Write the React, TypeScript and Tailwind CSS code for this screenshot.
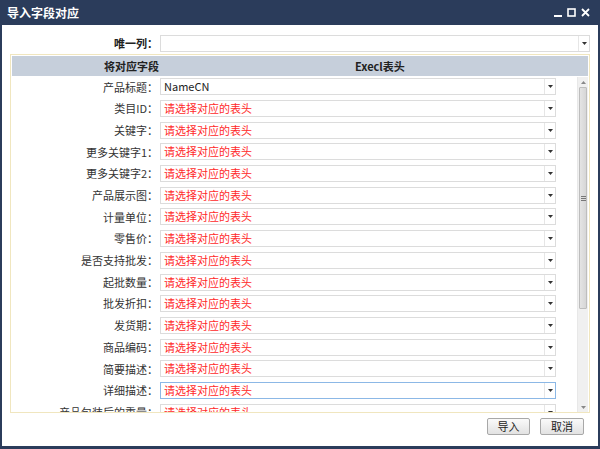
import React from 'react';

const rows: { label: string; value?: string; focused?: boolean }[] = [
  { label: '产品标题', value: 'NameCN' },
  { label: '类目ID' },
  { label: '关键字' },
  { label: '更多关键字1' },
  { label: '更多关键字2' },
  { label: '产品展示图' },
  { label: '计量单位' },
  { label: '零售价' },
  { label: '是否支持批发' },
  { label: '起批数量' },
  { label: '批发折扣' },
  { label: '发货期' },
  { label: '商品编码' },
  { label: '简要描述' },
  { label: '详细描述', focused: true },
  { label: '产品包装后的重量' },
];

const Select: React.FC<{ value?: string; focused?: boolean; className?: string }> = ({
  value,
  focused,
  className = '',
}) => (
  <div
    className={`flex h-[17px] items-stretch border bg-white ${
      focused ? 'border-[#8cb8e6]' : 'border-[#dcdcdc]'
    } ${className}`}
  >
    <div
      className={`flex flex-1 items-center overflow-hidden whitespace-nowrap pl-[3px] text-[11px] leading-none ${
        value ? 'text-[#222]' : 'text-[#ff2a2a]'
      }`}
    >
      {value ?? '请选择对应的表头'}
    </div>
    <div className="flex w-[11px] items-center justify-center border-l border-[#e6e6e6]">
      <svg width="5" height="3" viewBox="0 0 5 3">
        <path d="M0 0h5L2.5 3z" fill="#333" />
      </svg>
    </div>
  </div>
);

export default function App() {
  return (
    <div
      className="flex h-[449px] w-[600px] flex-col bg-[#2b3c5b] px-[2px] pb-[3px]"
      style={{ fontFamily: '"Noto Sans CJK SC", "Noto Sans", sans-serif' }}
    >
      {/* title bar */}
      <div className="flex h-[25px] items-center justify-between pl-[5px] pr-[8px]">
        <span className="text-[12px] font-bold text-white">导入字段对应</span>
        <div className="flex items-center gap-[5px] text-white">
          <svg width="8" height="8" viewBox="0 0 8 8">
            <rect x="0" y="6" width="8" height="2" fill="#fff" />
          </svg>
          <svg width="9" height="9" viewBox="0 0 9 9">
            <rect x="1" y="1" width="7" height="7" fill="none" stroke="#fff" strokeWidth="1.6" />
          </svg>
          <svg width="9" height="9" viewBox="0 0 9 9">
            <path d="M1 1l7 7M8 1L1 8" stroke="#fff" strokeWidth="1.8" />
          </svg>
        </div>
      </div>

      {/* body */}
      <div className="flex flex-1 flex-col bg-white px-[8px] pt-[9px]">
        <div className="flex h-[18px] items-center">
          <div className="w-[150px] pr-[2px] text-right text-[11px] font-bold text-[#222]">唯一列：</div>
          <Select value="" className="flex-1" />
        </div>

        <div className="mt-[2px] flex h-[359px] flex-col border border-[#f0e6bf]">
          <div className="mx-[1px] mt-[1px] flex h-[20px] items-center bg-[#c6cfdb] text-[11px] font-bold text-[#222]">
            <div className="w-[149px] pr-[2px] text-right">将对应字段</div>
            <div className="flex-1 pl-[194px] text-left">Execl表头</div>
          </div>
          <div className="flex flex-1 overflow-hidden">
            <div className="flex-1 overflow-hidden">
              {rows.map((r) => (
                <div key={r.label} className="flex h-[21.7px] items-center">
                  <div className="w-[149px] whitespace-nowrap pr-[2px] text-right text-[11px] text-[#333]">
                    {r.label}：
                  </div>
                  <Select value={r.value} focused={r.focused} className="w-[396px]" />
                </div>
              ))}
            </div>
            <div className="mr-[1px] mt-[1px] flex w-[11px] flex-col border-l border-[#e8e8e8] bg-[#f0f0f0]">
              <div className="flex h-[10px] items-center justify-center">
                <svg width="5" height="3" viewBox="0 0 5 3">
                  <path d="M0 3h5L2.5 0z" fill="#888" />
                </svg>
              </div>
              <div className="mx-[1px] flex h-[222px] items-center justify-center rounded-[1px] border border-[#bdbdbd] bg-gradient-to-r from-[#e4e4e4] to-[#d6d6d6]">
                <svg width="5" height="5" viewBox="0 0 5 5">
                  <path d="M0 0.5h5M0 2.5h5M0 4.5h5" stroke="#777" strokeWidth="1" />
                </svg>
              </div>
              <div className="flex-1" />
              <div className="flex h-[10px] items-center justify-center">
                <svg width="5" height="3" viewBox="0 0 5 3">
                  <path d="M0 0h5L2.5 3z" fill="#888" />
                </svg>
              </div>
            </div>
          </div>
        </div>

        <div className="mt-[5px] flex justify-end gap-[10px] pr-[6px]">
          <button className="h-[17px] w-[43px] rounded-[2px] border border-[#a8a8a8] bg-gradient-to-b from-[#fafafa] to-[#e2e2e2] text-[11px] leading-none text-[#222]">
            导入
          </button>
          <button className="h-[17px] w-[44px] rounded-[2px] border border-[#a8a8a8] bg-gradient-to-b from-[#fafafa] to-[#e2e2e2] text-[11px] leading-none text-[#222]">
            取消
          </button>
        </div>
      </div>
    </div>
  );
}
